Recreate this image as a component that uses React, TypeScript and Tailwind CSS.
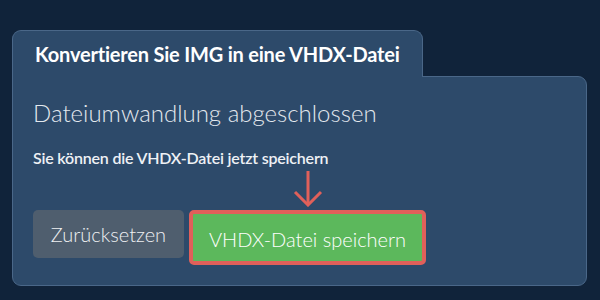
import React from 'react'

export default function App() {
  return (
    <div className="w-[600px] h-[300px] bg-[#10233a] pt-[30px] pl-[12px] font-['Lato','Liberation_Sans',sans-serif] overflow-hidden">
      {/* tab */}
      <div className="relative z-10 -mb-px w-[411px] h-[47px] bg-[#2d4a6a] border border-b-0 border-[#4a6788] rounded-t-[9px] pl-[22px] pt-[11px]">
        <h1 className="text-[20px] leading-[24px] font-bold text-white tracking-[-0.2px]">
          Konvertieren Sie IMG in eine VHDX-Datei
        </h1>
      </div>

      {/* body */}
      <div className="w-[575px] h-[210px] bg-[#2d4a6a] border border-[#4a6788] rounded-b-[9px] rounded-tr-[9px] pl-[20px] pt-[21px]">
        <h2 className="text-[24px] leading-[29px] font-light text-[#e3e8ee]">
          Dateiumwandlung abgeschlossen
        </h2>
        <p className="mt-[21px] text-[16px] leading-[20px] font-semibold tracking-[-0.2px] text-[#eef1f5]">
          Sie können die VHDX-Datei jetzt speichern
        </p>

        <div className="mt-[42px] flex items-start gap-[5px]">
          <button className="w-[151px] h-[48px] rounded-[5px] bg-[#4f5e6e] text-[20px] font-light text-[#eef0f2]">
            Zurücksetzen
          </button>
          <div className="relative">
            {/* pointer arrow */}
            <svg
              className="absolute bottom-full left-1/2 -translate-x-1/2 mb-[3px]"
              width="30"
              height="36"
              viewBox="0 0 30 36"
              fill="none"
              stroke="#e0605a"
              strokeWidth="3"
            >
              <path d="M15 0V34" />
              <path d="M2 21L15 34L28 21" />
            </svg>
            <button className="w-[237px] h-[55px] pt-[3px] rounded-[5px] border-4 border-[#e0605a] bg-[#5cb85c] text-[20px] font-light text-white">
              VHDX-Datei speichern
            </button>
          </div>
        </div>
      </div>
    </div>
  )
}
